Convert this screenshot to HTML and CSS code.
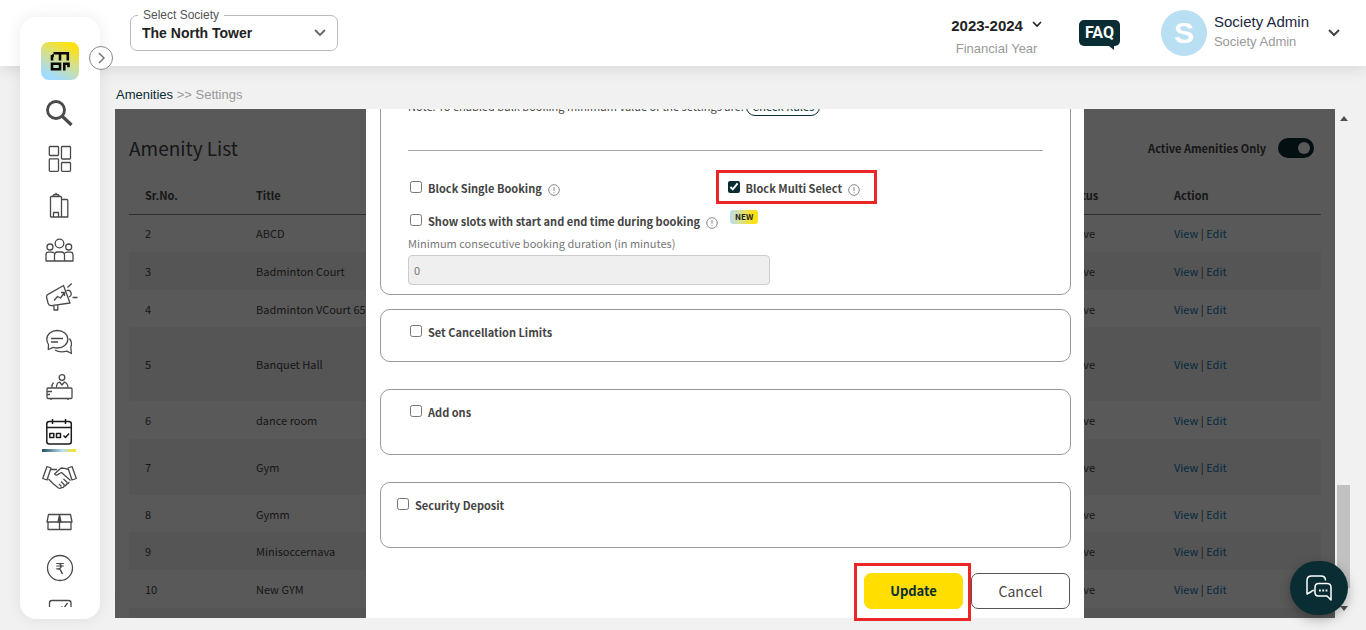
FILE: index.html
```html
<!DOCTYPE html>
<html lang="en">
<head>
<meta charset="utf-8">
<title>Amenities - Settings</title>
<link rel="stylesheet" href="styles.css">
</head>
<body>
<header class="topbar">
  <fieldset class="society">
    <legend><label for="society">Select Society</label></legend>
    <select id="society"><option>The North Tower</option></select>
    <svg class="society-chevron" width="12" height="8" viewBox="0 0 12 8"><path d="M1 1l5 5 5-5" fill="none" stroke="#666" stroke-width="1.800"/></svg>
  </fieldset>
  <div class="topbar-right">
    <div class="year">
      <button class="year-button" type="button">2023-2024
        <svg width="10" height="7" viewBox="0 0 10 7"><path d="M1 1l4 4 4-4" fill="none" stroke="#222" stroke-width="1.6"/></svg>
      </button>
      <span class="year-caption">Financial Year</span>
    </div>
    <a class="faq" href="#">FAQ</a>
    <button class="profile" type="button">
      <span class="avatar">S</span>
      <span class="profile-text"><span class="profile-name">Society Admin</span><span class="profile-role">Society Admin</span></span>
      <svg width="12" height="8" viewBox="0 0 12 8"><path d="M1 1l5 5 5-5" fill="none" stroke="#444" stroke-width="2"/></svg>
    </button>
  </div>
</header>

<nav class="sidebar" aria-label="Main">
  <a class="logo" href="#" aria-label="Home">
    <svg width="38" height="38" viewBox="0 0 38 38" fill="none" stroke="#0a0a0a" stroke-width="2.6">
      <path d="M11 18.500v-5.500M12.500 11.300h14.300v7.200M19 11.300v7.200M11 13.500h2"/>
      <path d="M11 21.700h8v5.600h-8zM23.300 28.600v-6.900h4.200v3.500"/>
    </svg>
  </a>
  <button class="expand" type="button" aria-label="Expand menu"><svg width="7" height="12" viewBox="0 0 7 12"><path d="M1 1l5 5-5 5" fill="none" stroke="#777" stroke-width="1.500"/></svg></button>
  <ul class="menu">
    <li><a href="#" aria-label="Search"><svg viewBox="0 0 36 32"><g stroke-width="2.800"><circle cx="14" cy="13" r="8.500"/><path d="M20 19l9.500 9" stroke-width="3.200"/></g></svg></a></li>
    <li><a href="#" aria-label="Dashboard"><svg viewBox="0 0 36 32"><rect x="7.300" y="3.500" width="9.200" height="9" rx=".8"/><rect x="19.500" y="3.500" width="9" height="12.500" rx=".8"/><rect x="7.300" y="15.800" width="9.200" height="12.500" rx=".8"/><rect x="19.500" y="19.500" width="9" height="8.800" rx=".8"/></svg></a></li>
    <li><a href="#" aria-label="Building"><svg viewBox="0 0 36 32"><path d="M8.500 28V8.500q0-1 1-1h9q1 0 1 1V28M19.500 10.500h5.300q1 0 1 1V28H8.500M11 7.200q0-1.700 2-1.700h2q2 0 2 1.700M14 5.500V3.800M11.500 28v-4.500h5V28"/></svg></a></li>
    <li><a href="#" aria-label="Members"><svg viewBox="0 0 36 32"><circle cx="17.500" cy="8.500" r="4.300"/><circle cx="8" cy="12" r="3"/><circle cx="26.700" cy="12" r="3"/><path d="M12.500 26v-6q0-3 3-3h4q3 0 3 3v6M12 18q-1-.8-2.500-.8h-3Q4 17.200 4 20v6h27v-6q0-2.800-2.500-2.800h-3q-1.500 0-2.500.8"/></svg></a></li>
    <li><a href="#" aria-label="Announcements"><svg viewBox="0 0 36 32"><path d="M4.500 16q0-1.800 1.500-2.600L21.500 4.500 28 22 9.500 24.600Q7 24.800 6 22zM12 24.500v4.500h3.800v-5M25.500 6.500l4.200-4M30.500 16.500h5M24.500 9.500q3.500-1 4.500 2t-2 4.500M12 19.500l3.500-4 3 1.500 4-5.500M19 11.500h3.500V15"/></svg></a></li>
    <li><a href="#" aria-label="Messages"><svg viewBox="0 0 36 32"><path d="M6.300 23.500l.2-5Q4.800 16 4.800 13.300C4.800 8.500 9.300 4.500 15.300 4.500s10.500 4 10.500 8.800-4.500 8.700-10.500 8.700q-2.300 0-4-.6zM9 12.500h12M9 16h7M27.500 12.500q3.200 4 1.300 8.500l.6 6.500-4.500-2.300q-7.500 1.800-11.900-1.200"/></svg></a></li>
    <li><a href="#" aria-label="Front desk"><svg viewBox="0 0 36 32"><circle cx="20" cy="6.500" r="2.800"/><rect x="5" y="17" width="25" height="10.500" rx="1"/><path d="M14.500 16.500q0-4.500 3-5.500l2.500 3 2.500-3q3 1 3.500 5.500M10 16.500q-.5-3 1.500-5M5 20.500h5M5 23.500h3M9 27.500V29M26 27.500V29"/></svg></a></li>
    <li class="current"><a href="#" aria-label="Amenities" aria-current="page"><svg viewBox="0 0 36 32"><rect x="4.800" y="5.500" width="24.500" height="22.500" rx="2.500"/><path d="M4.800 11.500h24.500M10.500 3v5M23.500 3v5M7.800 17.500h4v4h-4zM14.500 17.500h4v4h-4zM21.500 19.500l2 2 3.500-4"/></svg></a></li>
    <li><a href="#" aria-label="Partners"><svg viewBox="0 0 36 32"><path d="M5 5.500l4 1.500-4 12-4.300-1.500zM30 5.500l-4 1.500 4 12 4.300-1.500zM9 8.500h6M26 8.500q-3-1.500-7-1.500L12.500 13q1.500 2.500 5-.5l2-1 9 8M6.500 18q3 3 5 5l5 4q2 1 2.500-.5M19 26.500q2.500.8 3-1.500 2.500 0 2.500-2.200 2.500.2 2.500-2M17 23l2.500 2.500M19 20.500l3.500 3.500M21.500 18l4 3.800"/></svg></a></li>
    <li><a href="#" aria-label="Parcels"><svg viewBox="0 0 36 32"><path d="M6.500 8.500h22L30 16H5zM6 16v7.500h23V16M17.500 16v7.500"/><path d="M17.500 9l1.500 7h-3z" fill="#444"/></svg></a></li>
    <li><a href="#" aria-label="Payments"><svg viewBox="0 0 36 32"><circle cx="18" cy="17" r="12.500"/><text x="18" y="22.500" text-anchor="middle">₹</text></svg></a></li>
    <li><a href="#" aria-label="Tasks"><svg viewBox="0 0 36 32"><path d="M7.500 30V7q0-2.500 2.500-2.500h16.500Q29 4.500 29 7v23H7.500M19.500 10.500l2 2L25.500 7"/></svg></a></li>
  </ul>
</nav>

<main class="page">
  <div class="crumbs"><a href="#">Amenities</a> &gt;&gt; Settings</div>
  <div class="frame">
    <div class="stage">
      <section class="list">
        <div class="list-head">
          <h1>Amenity List</h1>
          <label class="switch-label">Active Amenities Only <input class="switch" type="checkbox" role="switch" checked></label>
        </div>
        <table class="amenities">
          <thead><tr><th class="col-no">Sr.No.</th><th>Title</th><th class="col-status">Status</th><th class="col-action">Action</th></tr></thead>
          <tbody>
            <tr><td>2</td><td>ABCD</td><td>Active</td><td><a href="#">View</a> | <a href="#">Edit</a></td></tr>
            <tr><td>3</td><td>Badminton Court</td><td>Active</td><td><a href="#">View</a> | <a href="#">Edit</a></td></tr>
            <tr class="row-sm"><td>4</td><td>Badminton VCourt 65</td><td>Active</td><td><a href="#">View</a> | <a href="#">Edit</a></td></tr>
            <tr class="row-xl"><td>5</td><td>Banquet Hall</td><td>Active</td><td><a href="#">View</a> | <a href="#">Edit</a></td></tr>
            <tr><td>6</td><td>dance room</td><td>Active</td><td><a href="#">View</a> | <a href="#">Edit</a></td></tr>
            <tr class="row-lg"><td>7</td><td>Gym</td><td>Active</td><td><a href="#">View</a> | <a href="#">Edit</a></td></tr>
            <tr class="row-sm"><td>8</td><td>Gymm</td><td>Active</td><td><a href="#">View</a> | <a href="#">Edit</a></td></tr>
            <tr><td>9</td><td>Minisoccernava</td><td>Active</td><td><a href="#">View</a> | <a href="#">Edit</a></td></tr>
            <tr><td>10</td><td>New GYM</td><td>Active</td><td><a href="#">View</a> | <a href="#">Edit</a></td></tr>
            <tr><td></td><td></td><td></td><td></td></tr>
          </tbody>
        </table>
      </section>
      <div class="overlay">
        <form class="modal">
          <section class="card card-booking">
            <p class="note">Note: To enabled bulk booking minimum value of the settings are: <button class="rules" type="button">Check Rules</button></p>
            <hr>
            <div class="options">
              <div class="option"><input type="checkbox" id="single"><label for="single">Block Single Booking</label>
                <svg class="info" viewBox="0 0 12 12"><circle cx="6" cy="6" r="5.300"/><path d="M6 3v3.800M6 8.200v1"/></svg></div>
              <div class="option marked"><input type="checkbox" id="multi" checked><label for="multi">Block Multi Select</label>
                <svg class="info" viewBox="0 0 12 12"><circle cx="6" cy="6" r="5.300"/><path d="M6 3v3.800M6 8.200v1"/></svg></div>
            </div>
            <div class="option option-slots"><input type="checkbox" id="slots"><label for="slots">Show slots with start and end time during booking</label>
              <svg class="info" viewBox="0 0 12 12"><circle cx="6" cy="6" r="5.300"/><path d="M6 3v3.800M6 8.200v1"/></svg>
              <span class="badge">NEW</span></div>
            <label class="field-label" for="duration">Minimum consecutive booking duration (in minutes)</label>
            <input class="field" id="duration" type="text" value="0" disabled>
          </section>
          <section class="card card-limits"><div class="option"><input type="checkbox" id="limits"><label for="limits">Set Cancellation Limits</label></div></section>
          <section class="card card-tall"><div class="option"><input type="checkbox" id="addons"><label for="addons">Add ons</label></div></section>
          <section class="card card-tall card-deposit"><div class="option"><input type="checkbox" id="deposit"><label for="deposit">Security Deposit</label></div></section>
          <div class="actions">
            <button class="button primary" type="button">Update</button>
            <button class="button" type="button">Cancel</button>
          </div>
        </form>
      </div>
    </div>
    <div class="scroll">
      <svg width="8" height="5" viewBox="0 0 8 5"><path d="M0 5l4-5 4 5z"/></svg>
      <span class="thumb"></span>
      <svg width="8" height="5" viewBox="0 0 8 5"><path d="M0 0l4 5 4-5z"/></svg>
    </div>
  </div>
</main>

<button class="chat" type="button" aria-label="Chat">
  <svg width="28" height="28" viewBox="0 0 28 28" fill="none" stroke="#fff" stroke-width="1.500" stroke-linejoin="round">
    <path d="M6.500 17.500L2 20V6.500Q2 2 6.500 2h9.500q4.500 0 4.500 4.500M9 16.500H7.500l-1 1"/>
    <path d="M13.500 9.500h8.500q4 0 4 4V26l-4-4h-8.500q-3.500 0-3.500-3.500v-5q0-4 3.500-4z"/>
    <path d="M14 16.500h1.800M17.300 16.500h1.800M20.600 16.500h1.800" stroke-width="2"/>
  </svg>
</button>
</body>
</html>
```
FILE: styles.css
```css
* { box-sizing: border-box; }
body {
  margin: 0;
  height: 100vh;
  display: flex;
  flex-direction: column;
  overflow: hidden;
  background: #f1f1f1;
  color: #444;
  font-family: "Liberation Sans", Arial, sans-serif;
  font-size: 13px;
}
button, input, select { font: inherit; color: inherit; }
button { background: none; border: 0; padding: 0; }
a { text-decoration: none; color: inherit; }

.topbar {
  display: flex;
  justify-content: space-between;
  flex: none;
  height: 66px;
  padding: 0 26px 0 130px;
  background: #fff;
  box-shadow: 0 2px 16px rgba(0, 0, 0, .12);
}
.society {
  position: relative;
  width: 208px;
  height: 43px;
  margin: 8px 0 0;
  padding: 0 0 0 7px;
  border: 1px solid #bbb;
  border-radius: 7px;
}
.society legend { padding: 0 5px; font-size: 12px; line-height: 14px; color: #555; }
.society select {
  display: block;
  width: 100%;
  height: 22px;
  padding: 0 4px;
  appearance: none;
  border: 0;
  background: none;
  font-size: 14px;
  font-weight: 700;
  color: #222;
}
.society-chevron { position: absolute; right: 11px; top: 7px; }
.topbar-right { display: flex; align-items: flex-start; }
.year { display: flex; flex-direction: column; align-items: center; padding-top: 16px; }
.year-button { display: flex; align-items: center; gap: 9px; font-size: 15px; line-height: 20px; font-weight: 700; color: #222; }
.year-button svg { margin-bottom: 4px; }
.year-caption { line-height: 16px; margin-top: 5px; color: #999; }
.faq {
  position: relative;
  width: 41px;
  margin: 20px 41px 0 37px;
  border-radius: 5px;
  background: #0a2d33;
  color: #fff;
  font: 700 16px/26px Roboto, sans-serif;
  text-align: center;
}
.faq::after {
  content: "";
  position: absolute;
  right: 6px;
  top: 100%;
  border-top: 4px solid #0a2d33;
  border-left: 5px solid transparent;
}
.profile { display: flex; align-items: center; padding-top: 10px; text-align: left; }
.avatar {
  width: 46px;
  height: 46px;
  margin-right: 7px;
  border-radius: 50%;
  background: #b9dff2;
  color: #fff;
  font-size: 30px;
  line-height: 46px;
  font-weight: 700;
  text-align: center;
}
.profile-text { display: flex; flex-direction: column; margin-right: 19px; padding-bottom: 3px; }
.profile-name { font-size: 15px; line-height: 20px; color: #1c2740; }
.profile-role { line-height: 20px; color: #999; }

.sidebar {
  position: fixed;
  left: 20px;
  top: 17px;
  bottom: 11px;
  z-index: 2;
  width: 80px;
  display: flex;
  flex-direction: column;
  align-items: center;
  padding: 25px 0 12px;
  border-radius: 16px;
  background: #fff;
  box-shadow: 0 0 16px rgba(0, 0, 0, .08);
}
.logo { height: 38px; border-radius: 8px; background: linear-gradient(25deg, #a3dbfd 15%, #d6e08a 55%, #fbe116 85%); }
.expand {
  position: absolute;
  left: 69px;
  top: 29px;
  width: 24px;
  height: 24px;
  display: grid;
  place-items: center;
  border: 1px solid #888;
  border-radius: 50%;
  background: #fff;
}
.menu { flex: 1; min-height: 0; overflow: hidden; margin: 10px 0 0; padding: 0; list-style: none; }
.menu li { position: relative; height: 46px; display: flex; align-items: center; }
.menu li:nth-child(n+5) { height: 45px; }
.menu a { display: block; }
.menu svg { display: block; width: 36px; height: 32px; fill: none; stroke: #4a4a4a; stroke-width: 1.3; stroke-linejoin: round; }
.menu text { fill: #4a4a4a; stroke: none; font: 15px "DejaVu Sans", sans-serif; }
.menu .current svg { stroke: #1c1c1c; stroke-width: 1.5; }
.current::after {
  content: "";
  position: absolute;
  left: 0;
  right: 2px;
  bottom: 2px;
  height: 3px;
  background: linear-gradient(90deg, #22505a, #b9dff2 60%, #fbe116);
}

.page { flex: 1; min-height: 0; display: flex; flex-direction: column; padding: 20px 16px 12px 115px; }
.crumbs { height: 23px; padding-left: 1px; line-height: 18px; color: #999; }
.crumbs a { color: #0a2d33; }
.frame { flex: 1; min-height: 0; display: flex; }
.stage { position: relative; flex: 1; background: #fff; font-family: "Noto Sans CJK SC", sans-serif; font-size: 11px; }
.list { height: 100%; overflow: hidden; padding: 0 14px; }
.list-head { display: flex; justify-content: space-between; align-items: center; height: 67px; padding: 10px 7px 0 0; }
h1 { margin: 0; font-size: 19px; font-weight: 400; }
.switch-label { display: flex; align-items: center; gap: 12px; font-weight: 700; }
.switch {
  appearance: none;
  width: 36px;
  height: 20px;
  margin: 0;
  padding: 4px;
  display: flex;
  justify-content: flex-end;
  border-radius: 10px;
  background: #0a2d33;
}
.switch::before { content: ""; width: 12px; height: 12px; border-radius: 50%; background: #fff; }
.amenities { width: 100%; border-collapse: collapse; table-layout: fixed; }
.amenities th, .amenities td { padding: 0 16px; text-align: left; white-space: nowrap; line-height: 18px; }
.amenities th { border-bottom: 1px solid #888; }
.amenities tr { height: 38px; }
.amenities .row-sm { height: 37px; }
.amenities .row-xl { height: 74px; }
.amenities .row-lg { height: 56px; }
.amenities tbody tr:nth-child(even) { background: #f3f3f3; }
.amenities a { color: #0d77b5; }
.col-no { width: 111px; }
.col-status { width: 110px; }
.col-action { width: 163px; }

.overlay {
  position: absolute;
  inset: 0;
  display: flex;
  justify-content: center;
  align-items: flex-end;
  background: rgba(0, 0, 0, .65);
  clip-path: inset(0 0 -3px 0);
}
.modal { flex: 0 1 718px; padding: 0 13px 9px 14px; background: #fff; }
.card { border: 1px solid #999; border-radius: 10px; margin-bottom: 27px; padding: 0 27px; }
.card-booking { margin-bottom: 14px; padding-top: 12px; padding-bottom: 9px; }
.card-limits { height: 53px; padding-top: 10px; }
.card-tall { height: 66px; padding-top: 10px; }
.card-deposit { padding-left: 14px; margin-bottom: 25px; }
.note { margin: 0; line-height: 20px; }
.rules { padding: 0 5px; border: 1px solid #0a2d33; border-radius: 9px; line-height: 18px; color: #0a2d33; }
hr { margin: 34px 0 25px; border: 0; border-top: 1px solid #aaa; }
.options { display: grid; grid-template-columns: 1fr 1fr; }
.option { display: flex; align-items: center; gap: 6px; height: 24px; padding-left: 2px; font-weight: 700; }
.option input { width: 12px; height: 12px; margin: 0 0 2px; accent-color: #0a2d33; }
.marked { position: relative; justify-self: start; }
.marked::after { content: ""; position: absolute; inset: -6px -17px -4px -10px; border: 3px solid #ea2626; pointer-events: none; }
.option-slots { margin-top: 9px; }
.info { width: 12px; height: 12px; margin-top: 3px; fill: none; stroke: #888; }
.badge {
  align-self: flex-start;
  margin: 1px 0 0 6px;
  padding: 0 5px;
  border-radius: 3px;
  background: linear-gradient(90deg, #b9dff2, #fbe116 80%);
  color: #222;
  font-size: 8px;
  line-height: 14px;
}
.field-label { display: block; line-height: 20px; color: #777; }
.field {
  display: block;
  width: 57%;
  height: 30px;
  margin-top: 2px;
  padding: 0 5px;
  border: 1px solid #ccc;
  border-radius: 4px;
  background: #efefef;
  color: #777;
}
.actions { display: flex; justify-content: flex-end; gap: 8px; padding-right: 1px; }
.button { position: relative; width: 99px; height: 36px; border: 1px solid #555; border-radius: 7px; background: #fff; font-size: 14px; line-height: 20px; }
.primary { border-color: #ffde00; background: #ffde00; color: #0a2d33; font-size: 13px; font-weight: 700; z-index: 1; }
.primary::after { content: ""; position: absolute; inset: -11px -9px -13px -11px; border: 3px solid #ea2626; pointer-events: none; }

.scroll { width: 15px; display: flex; flex-direction: column; align-items: center; padding: 7px 0 7px 2px; }
.scroll svg { fill: #505050; }
.thumb { width: 13px; height: 103px; margin: auto 0 18px; background: #c1c1c1; }
.chat {
  position: fixed;
  right: 18px;
  bottom: 15px;
  z-index: 3;
  width: 58px;
  height: 54px;
  display: grid;
  place-items: center;
  border-radius: 27px;
  background: #0a2d33;
  box-shadow: 0 4px 12px rgba(0, 0, 0, .3);
}
```
